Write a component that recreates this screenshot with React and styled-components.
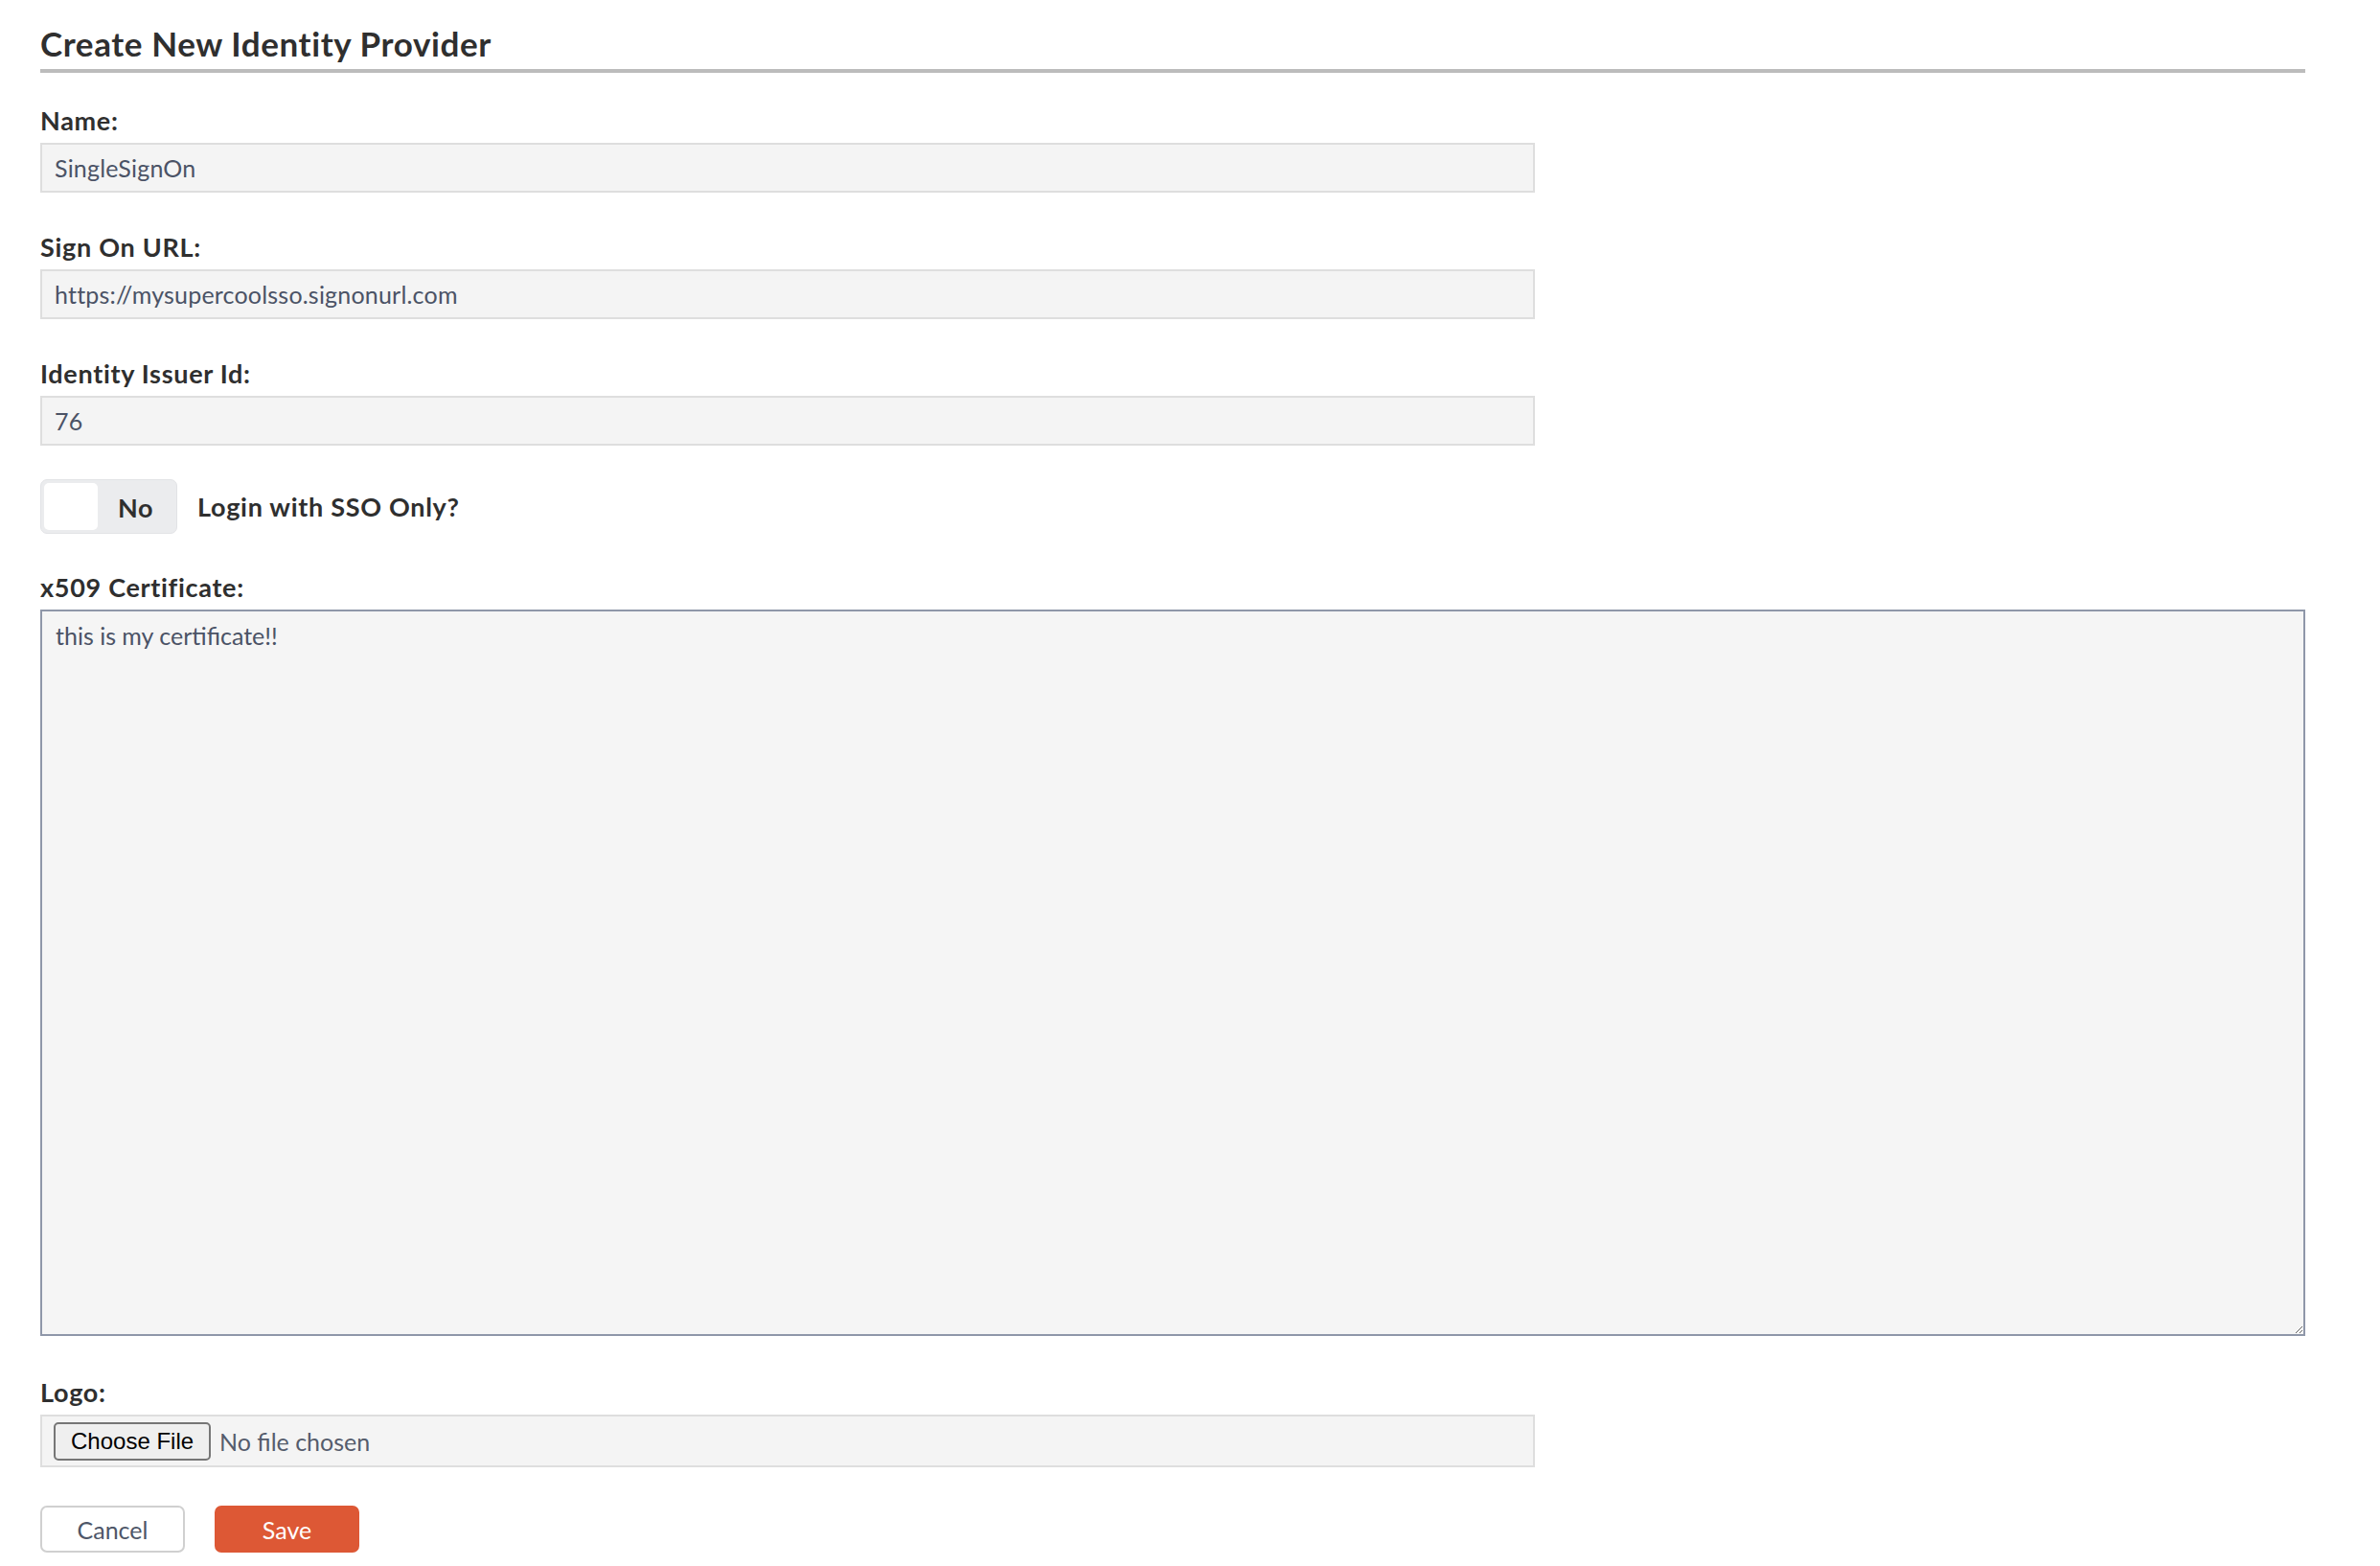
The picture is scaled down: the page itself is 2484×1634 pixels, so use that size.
import React from 'react';
import styled, { createGlobalStyle } from 'styled-components';

const GlobalStyle = createGlobalStyle`
  body {
    margin: 0;
    background: #fff;
    font-family: "Lato", "Noto Sans", sans-serif;
    color: #2f2f2f;
  }
`;

const Page = styled.div`
  padding: 25px 78px 0 42px;
`;

const Heading = styled.h1`
  margin: 0 0 35px;
  padding-bottom: 7px;
  font-size: 35px;
  line-height: 40px;
  letter-spacing: 0.6px;
  font-weight: 700;
  color: #2f2f2f;
  border-bottom: 4px solid #bcbcbc;
`;

const Field = styled.div`
  display: flex;
  flex-direction: column;
  margin-bottom: ${p => p.gap || 42}px;
`;

const Label = styled.label`
  font-size: 27px;
  line-height: 30px;
  letter-spacing: 0.7px;
  font-weight: 700;
  color: #2f2f2f;
  margin-bottom: 8px;
`;

const TextInput = styled.input`
  box-sizing: border-box;
  width: 1560px;
  height: 52px;
  padding: 0 13px;
  border: 2px solid #dedede;
  background: #f4f4f4;
  font-family: inherit;
  font-size: 25px;
  letter-spacing: 0.2px;
  color: #4b5366;
  outline: none;
`;

const ToggleRow = styled.div`
  display: flex;
  align-items: center;
  gap: 21px;
  margin: -2px 0 41px;
`;

const Toggle = styled.div`
  box-sizing: border-box;
  width: 143px;
  height: 57px;
  padding: 3px;
  display: flex;
  align-items: center;
  background: #ebecee;
  border: 1px solid #e2e3e6;
  border-radius: 7px;
`;

const Knob = styled.span`
  width: 56px;
  height: 49px;
  background: #fff;
  border-radius: 5px;
`;

const ToggleText = styled.span`
  flex: 1;
  text-align: center;
  font-size: 27px;
  letter-spacing: 0.5px;
  font-weight: 700;
  color: #2f2f2f;
  padding-top: 2px;
`;

const ToggleLabel = styled.span`
  font-size: 27px;
  letter-spacing: 0.7px;
  font-weight: 700;
  color: #2f2f2f;
`;

const TextArea = styled.textarea`
  box-sizing: border-box;
  width: 100%;
  height: 758px;
  padding: 10px 14px;
  border: 2px solid #8f97a9;
  background: #f5f5f5;
  font-family: inherit;
  font-size: 25px;
  line-height: 1.2;
  color: #4b5366;
  outline: none;
`;

const FileBox = styled.div`
  box-sizing: border-box;
  width: 1560px;
  height: 55px;
  padding: 0 12px;
  display: flex;
  align-items: center;
  gap: 9px;
  border: 2px solid #dedede;
  background: #f4f4f4;
`;

const FileButton = styled.button`
  box-sizing: border-box;
  height: 40px;
  padding: 0 16px;
  font-family: "Liberation Sans", Arial, sans-serif;
  font-size: 24px;
  color: #000;
  background: #efefef;
  border: 2px solid #767676;
  border-radius: 5px;
`;

const FileName = styled.span`
  font-size: 25px;
  color: #555c6c;
`;

const Actions = styled.div`
  display: flex;
  gap: 31px;
`;

const Button = styled.button`
  box-sizing: border-box;
  width: 151px;
  height: 49px;
  font-family: inherit;
  font-size: 25px;
  border-radius: 7px;
  cursor: pointer;
  color: ${p => (p.primary ? '#fff' : '#4e5668')};
  background: ${p => (p.primary ? '#dd5835' : '#fff')};
  border: 2px solid ${p => (p.primary ? '#dd5835' : '#d0d0d0')};
`;

const App = () => {
  return (
    <Page>
      <GlobalStyle />
      <Heading>Create New Identity Provider</Heading>

      <Field>
        <Label>Name:</Label>
        <TextInput defaultValue="SingleSignOn" />
      </Field>

      <Field>
        <Label>Sign On URL:</Label>
        <TextInput defaultValue="https://mysupercoolsso.signonurl.com" />
      </Field>

      <Field gap={37}>
        <Label>Identity Issuer Id:</Label>
        <TextInput defaultValue="76" />
      </Field>

      <ToggleRow>
        <Toggle>
          <Knob />
          <ToggleText>No</ToggleText>
        </Toggle>
        <ToggleLabel>Login with SSO Only?</ToggleLabel>
      </ToggleRow>

      <Field gap={44}>
        <Label>x509 Certificate:</Label>
        <TextArea defaultValue="this is my certificate!!" />
      </Field>

      <Field gap={40}>
        <Label>Logo:</Label>
        <FileBox>
          <FileButton>Choose File</FileButton>
          <FileName>No file chosen</FileName>
        </FileBox>
      </Field>

      <Actions>
        <Button>Cancel</Button>
        <Button primary>Save</Button>
      </Actions>
    </Page>
  );
};

export default App;
